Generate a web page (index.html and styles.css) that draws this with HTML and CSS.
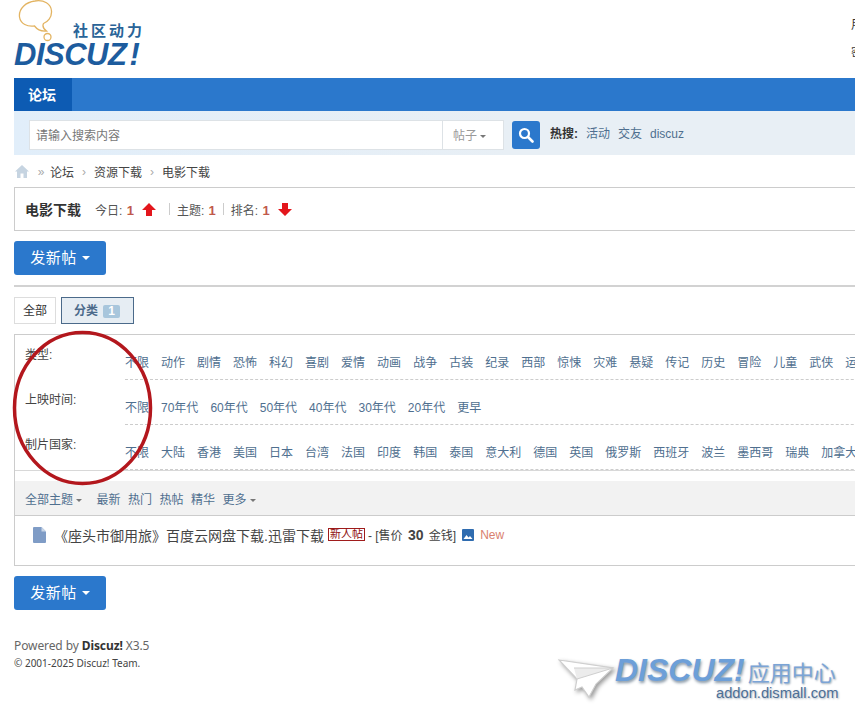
FILE: index.html
```html
<!DOCTYPE html>
<html lang="en">
<head>
    <meta charset="UTF-8">
    <meta name="viewport" content="width=device-width, initial-scale=1.0">
    <title>电影下载 - Discuz! Board</title>
    <link rel="stylesheet" href="styles.css">
</head>
<body>
    <div class="wrap">
        <div class="header">
            <div class="logo">
                <svg class="bubble" width="54" height="44" viewBox="0 0 54 44">
                    <path d="M19 1c9-1.500 16 3 16.500 10 .5 6.500-4 11-8 12.500-1.500 3 1 6 3 7.500-4.500 .5-9-1-12-5-7 1-14-2-15-9C2.500 8.500 10 2 19 1z" fill="#fff" stroke="#e3b462" stroke-width="1.300"/>
                    <circle cx="31.500" cy="37" r="3.500" fill="#fff" stroke="#e3b462" stroke-width="1.300"/>
                </svg>
                <div class="logo-tag">社区动力</div>
                <div class="logo-name">DISCUZ<span class="logo-mark">!</span></div>
            </div>
            <div class="login">
                <div>用户名</div>
                <div>密码</div>
            </div>
        </div>

        <div class="nav"><a class="nav-item">论坛</a></div>

        <div class="search">
            <div class="search-box">
                <div class="search-input">请输入搜索内容</div>
                <div class="search-type">帖子<span class="caret"></span></div>
            </div>
            <div class="search-btn">
                <svg width="16" height="16" viewBox="0 0 16 16"><circle cx="6.500" cy="6.500" r="4.500" fill="none" stroke="#fff" stroke-width="2.200"/><path d="M10 10l4.500 4.500" stroke="#fff" stroke-width="2.600" stroke-linecap="round"/></svg>
            </div>
            <div class="hot">
                <strong>热搜:</strong>
                <a>活动</a>
                <a>交友</a>
                <a>discuz</a>
            </div>
        </div>

        <div class="crumb">
            <svg class="home" width="14" height="13" viewBox="0 0 14 13"><path d="M7 0L0 6.500h2V13h3.500V8.500h3V13H12V6.500h2z" fill="#c6d4e1"/></svg>
            <span class="crumb-first">»</span>
            <a>论坛</a>
            <span class="crumb-sep">›</span>
            <a>资源下载</a>
            <span class="crumb-sep">›</span>
            <a>电影下载</a>
        </div>

        <div class="forum-head">
            <h1>电影下载</h1>
            <span class="stat stat-first">今日: <b>1</b></span>
            <svg class="arrow" width="14" height="13" viewBox="0 0 14 13"><path d="M7 0L14 7H10V13H4V7H0z" fill="#e3161c"/></svg>
            <span class="pipe pipe-first"></span>
            <span class="stat">主题: <b>1</b></span>
            <span class="pipe"></span>
            <span class="stat">排名: <b>1</b></span>
            <svg class="arrow" width="14" height="13" viewBox="0 0 14 13"><path d="M7 13L0 6H4V0H10V6H14z" fill="#e3161c"/></svg>
        </div>

        <a class="post-btn">发新帖<span class="caret caret-white"></span></a>
        <div class="rule"></div>

        <div class="tabs">
            <a class="tab">全部</a>
            <a class="tab tab-on">分类<span class="count">1</span></a>
        </div>

        <div class="list">
            <div class="filters">
                <div class="filter">
                    <div class="filter-name">类型:</div>
                    <div class="filter-links">
                        <a>不限</a><a>动作</a><a>剧情</a><a>恐怖</a><a>科幻</a><a>喜剧</a><a>爱情</a><a>动画</a><a>战争</a><a>古装</a><a>纪录</a><a>西部</a><a>惊悚</a><a>灾难</a><a>悬疑</a><a>传记</a><a>历史</a><a>冒险</a><a>儿童</a><a>武侠</a><a>运动</a>
                    </div>
                </div>
                <div class="filter">
                    <div class="filter-name">上映时间:</div>
                    <div class="filter-links">
                        <a>不限</a><a>70年代</a><a>60年代</a><a>50年代</a><a>40年代</a><a>30年代</a><a>20年代</a><a>更早</a>
                    </div>
                </div>
                <div class="filter">
                    <div class="filter-name">制片国家:</div>
                    <div class="filter-links">
                        <a>不限</a><a>大陆</a><a>香港</a><a>美国</a><a>日本</a><a>台湾</a><a>法国</a><a>印度</a><a>韩国</a><a>泰国</a><a>意大利</a><a>德国</a><a>英国</a><a>俄罗斯</a><a>西班牙</a><a>波兰</a><a>墨西哥</a><a>瑞典</a><a>加拿大</a>
                    </div>
                </div>
            </div>

            <div class="toolbar">
                <a class="toolbar-all">全部主题<span class="caret"></span></a>
                <a>最新</a>
                <a>热门</a>
                <a>热帖</a>
                <a>精华</a>
                <a>更多<span class="caret"></span></a>
            </div>

            <div class="thread">
                <svg class="doc" width="13" height="16" viewBox="0 0 13 16"><path d="M1 0h7.500L13 4.500V15a1 1 0 0 1-1 1H1a1 1 0 0 1-1-1V1a1 1 0 0 1 1-1z" fill="#7f9cc6"/><path d="M8.500 0v4.500H13z" fill="#c9d6e8"/></svg>
                <a class="thread-title">《座头市御用旅》百度云网盘下载.迅雷下载</a>
                <span class="newbie">新人帖</span>
                <span class="price">- [售价 <b>30</b> 金钱]</span>
                <svg class="pic" width="12" height="12" viewBox="0 0 12 12"><rect width="12" height="12" rx="1" fill="#2f6cb0"/><path d="M1.500 10l3-4 2 2.500 1.500-1.500 2.500 3z" fill="#fff"/></svg>
                <span class="new">New</span>
            </div>
        </div>

        <a class="post-btn">发新帖<span class="caret caret-white"></span></a>

        <div class="footer">
            <p class="powered">Powered by <b>Discuz!</b> X3.5</p>
            <p class="copy">© 2001-2025 Discuz! Team.</p>
        </div>
    </div>

    <svg class="circle" width="143" height="158" viewBox="0 0 143 158">
        <ellipse cx="71.500" cy="79" rx="68" ry="75.500" fill="none" stroke="#b3171d" stroke-width="3.500"/>
    </svg>

    <div class="stamp">
        <svg class="plane" width="58" height="42" viewBox="0 0 58 42">
            <path d="M1 1L55 9 38 25 31 38 24 28 17 31 19 20z" fill="#fff" stroke="#cfcfcf" stroke-width="1.200"/>
            <path d="M16 9L55 9 19 20" fill="#ececec" stroke="#cfcfcf"/>
        </svg>
        <div class="stamp-top"><span class="stamp-name">DISCUZ!</span><span class="stamp-cn">应用中心</span></div>
        <div class="stamp-url">addon.dismall.com</div>
    </div>
</body>
</html>
```

FILE: styles.css
```css
html, body {
    margin: 0;
    padding: 0;
    height: 718px;
    overflow: hidden;
}

body {
    position: relative;
    background: #fff;
    color: #444;
    font-family: "Liberation Sans", "Noto Sans CJK SC", sans-serif;
    font-size: 12px;
}

.wrap {
    width: 1100px;
    margin-left: 14px;
}

/* header */
.header {
    display: flex;
    height: 78px;
}

.logo {
    position: relative;
    width: 837px;
    flex: none;
    color: #1d5c9e;
}

.bubble {
    position: absolute;
    left: 2px;
    top: 0;
}

.logo-tag {
    padding: 21px 0 0 59px;
    font-size: 15px;
    line-height: 20px;
    font-weight: 700;
    letter-spacing: 3px;
    color: #2a6498;
}

.logo-name {
    margin-top: 2px;
    font-size: 31px;
    line-height: 24px;
    font-weight: 700;
    font-style: italic;
    letter-spacing: -0.500px;
}

.logo-mark {
    margin-left: 3px;
}

.login {
    padding-top: 11px;
    color: #333;
    line-height: 28px;
    white-space: nowrap;
}

/* nav */
.nav {
    height: 33px;
    background: #2b78cc;
}

.nav-item {
    display: block;
    width: 44px;
    height: 33px;
    padding-left: 14px;
    background: #0d5bb3;
    color: #fff;
    font-size: 14px;
    font-weight: 700;
    line-height: 35px;
}

/* search */
.search {
    display: flex;
    align-items: flex-start;
    height: 35px;
    padding: 9px 0 0 15px;
    background: linear-gradient(90deg, #e1eefa, #e8eff5 45%);
}

.search-box {
    display: flex;
    width: 473px;
    height: 28px;
    border: 1px solid #dde2e6;
    background: #fff;
    margin-right: 8px;
}

.search-input {
    flex: 1;
    padding-left: 6px;
    color: #777;
    line-height: 31px;
}

.search-type {
    width: 61px;
    border-left: 1px solid #dde2e6;
    padding-left: 10px;
    box-sizing: border-box;
    color: #999;
    line-height: 31px;
}

.caret {
    display: inline-block;
    width: 0;
    height: 0;
    margin-left: 3px;
    vertical-align: 2px;
    border-top: 3px solid #777;
    border-left: 3px solid transparent;
    border-right: 3px solid transparent;
}

.caret-white {
    margin-left: 5px;
    vertical-align: 3px;
    border-top: 4px solid #fff;
    border-left: 4px solid transparent;
    border-right: 4px solid transparent;
}

.search-btn {
    display: flex;
    align-items: center;
    justify-content: center;
    width: 28px;
    height: 28px;
    margin-top: 1px;
    border-radius: 3px;
    background: #2b78cc;
}

.hot {
    display: flex;
    gap: 8px;
    margin-left: 10px;
    line-height: 28px;
    color: #333;
}

.hot a {
    color: #4f6f8f;
}

/* crumb */
.crumb {
    display: flex;
    align-items: center;
    height: 33px;
    padding-left: 1px;
    color: #444;
}

.crumb-first {
    width: 8px;
    margin: 0 5px 0 8px;
    text-align: center;
    color: #aaa;
}

.crumb-sep {
    width: 20px;
    text-align: center;
    color: #aaa;
}

/* forum title box */
.forum-head {
    display: flex;
    align-items: center;
    height: 42px;
    margin-top: -1px;
    padding-left: 10px;
    border: 1px solid #ccc;
    border-right: 0;
    color: #555;
}

.forum-head h1 {
    margin: 0;
    font-size: 14px;
    font-weight: 700;
    color: #333;
}

.stat b {
    margin-left: 1px;
    color: #c0594b;
    font-size: 13px;
}

.stat-first {
    margin-left: 14px;
}

.arrow {
    margin-left: 8px;
}

.pipe {
    width: 1px;
    height: 12px;
    margin: 0 7px;
    background: #ccc;
}

.pipe-first {
    margin-left: 13px;
}

/* buttons */
.post-btn {
    display: block;
    width: 92px;
    height: 34px;
    margin-top: 10px;
    border-radius: 3px;
    background: #2b78cc;
    color: #fff;
    font-size: 15px;
    letter-spacing: 0.500px;
    line-height: 34px;
    text-align: center;
}

.rule {
    height: 2px;
    margin-top: 10px;
    background: #d2d2d2;
}

/* tabs */
.tabs {
    display: flex;
    gap: 5px;
    margin-top: 10px;
}

.tab {
    height: 25px;
    padding: 0 8px;
    border: 1px solid #ddd;
    color: #333;
    line-height: 27px;
}

.tab-on {
    padding: 0 13px 0 12px;
    border-color: #4b6a8a;
    background: #e6edf3;
    color: #4b6a8a;
    font-weight: 700;
}

.count {
    display: inline-block;
    width: 17px;
    height: 13px;
    margin-left: 5px;
    border-radius: 2px;
    background: #a8c6dc;
    color: #fff;
    line-height: 13px;
    text-align: center;
}

/* list box */
.list {
    margin-top: 10px;
    border: 1px solid #ccc;
    border-right: 0;
}

.filters {
    margin-bottom: 10px;
    border-bottom: 1px solid #d8d8d8;
}

.filter {
    display: flex;
    height: 45px;
}

.filter-name {
    width: 110px;
    flex: none;
    padding: 11px 0 0 10px;
    box-sizing: border-box;
    line-height: 18px;
    color: #444;
}

.filter-links {
    display: flex;
    flex: 1;
    gap: 12px;
    height: 45px;
    padding-top: 19px;
    box-sizing: border-box;
    border-bottom: 1px dashed #ccc;
    white-space: nowrap;
    line-height: 18px;
    color: #4f6f8f;
}

.toolbar {
    display: flex;
    align-items: center;
    gap: 7.500px;
    height: 34px;
    padding-left: 10px;
    background: #f2f2f2;
    border-bottom: 1px solid #ccc;
    color: #4f6f8f;
}

.toolbar-all {
    margin-right: 7px;
}

.thread {
    display: flex;
    align-items: center;
    height: 49px;
    padding: 0 0 12px 18px;
    box-sizing: border-box;
    color: #444;
}

.doc {
    margin-right: 8px;
}

.thread-title {
    font-size: 14px;
    color: #444;
}

.newbie {
    margin-left: 4px;
    padding: 0 1px;
    border: 1px solid #a01c1c;
    background: #fff;
    color: #8f1010;
    font-size: 11px;
    line-height: 11px;
}

.price {
    margin-left: 3px;
}

.price b {
    margin: 0 2px;
    font-size: 14px;
}

.pic {
    margin-left: 6px;
}

.new {
    margin-left: 6px;
    color: #d97f70;
}

/* footer */
.footer {
    margin-top: 27px;
    color: #666;
}

.footer p {
    margin: 0;
}

.powered {
    font-family: "Noto Sans", sans-serif;
    letter-spacing: -0.100px;
    line-height: 18px;
}

.powered b {
    color: #333;
}

.copy {
    margin-top: 7px;
    font-family: "Noto Sans", sans-serif;
    font-size: 10px;
    line-height: 16px;
    color: #444;
}

/* things lying over the page */
.circle {
    position: absolute;
    left: 11px;
    top: 329px;
}

.stamp {
    position: absolute;
    left: 558px;
    top: 655px;
    width: 282px;
    height: 50px;
}

.plane {
    position: absolute;
    left: 0;
    top: 4px;
    filter: drop-shadow(2px 2px 2px #999);
}

.stamp-top {
    display: flex;
    align-items: baseline;
    margin-left: 57px;
    height: 30px;
    line-height: 30px;
}

.stamp-name {
    font-size: 32px;
    font-style: italic;
    font-weight: 700;
    color: #6d9fd8;
    text-shadow: 1px 2px 3px #8b9aa8;
}

.stamp-cn {
    margin-left: 3px;
    font-size: 22px;
    color: #7ba4d6;
    text-shadow: 1px 1px 2px #9aa8b5;
}

.stamp-url {
    margin-left: 158px;
    font-size: 14.700px;
    line-height: 16px;
    color: #4e6f95;
    text-shadow: 1px 1px 2px #a9b4bf;
}
```
